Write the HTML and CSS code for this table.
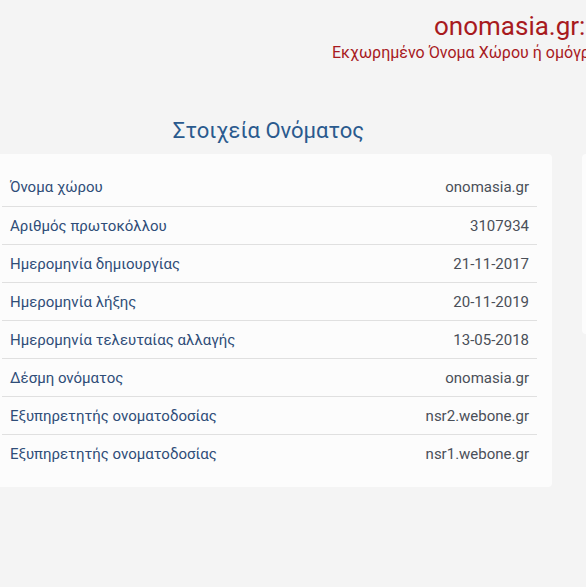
FILE: index.html
```html
<!DOCTYPE html>
<html lang="el">
<head>
<meta charset="utf-8">
<title>onomasia.gr</title>
<link rel="stylesheet" href="styles.css">
</head>
<body>
<header class="site-header">
  <h1 class="site-title">onomasia.gr:</h1>
  <p class="site-sub">Εκχωρημένο Όνομα Χώρου ή ομόγραφο</p>
</header>
<main class="content">
  <section class="col-main">
    <h2 class="section-title">Στοιχεία Ονόματος</h2>
    <div class="card">
      <table class="info">
        <tr><td>Όνομα χώρου</td><td class="val">onomasia.gr</td></tr>
        <tr><td>Αριθμός πρωτοκόλλου</td><td class="val">3107934</td></tr>
        <tr><td>Ημερομηνία δημιουργίας</td><td class="val">21-11-2017</td></tr>
        <tr><td>Ημερομηνία λήξης</td><td class="val">20-11-2019</td></tr>
        <tr><td>Ημερομηνία τελευταίας αλλαγής</td><td class="val">13-05-2018</td></tr>
        <tr><td>Δέσμη ονόματος</td><td class="val">onomasia.gr</td></tr>
        <tr><td>Εξυπηρετητής ονοματοδοσίας</td><td class="val">nsr2.webone.gr</td></tr>
        <tr><td>Εξυπηρετητής ονοματοδοσίας</td><td class="val">nsr1.webone.gr</td></tr>
      </table>
    </div>
  </section>
  <aside class="col-side">
    <div class="side-card"></div>
  </aside>
</main>
</body>
</html>
```
FILE: styles.css
```css
html, body {
  margin: 0;
  padding: 0;
  background: #f4f4f4;
  overflow: hidden;
}
body {
  font-family: Roboto, "Liberation Sans", sans-serif;
  width: 586px;
  height: 587px;
}
.site-header {
  white-space: nowrap;
  overflow: hidden;
  padding-top: 10px;
}
.site-title {
  margin: 0 0 0 434px;
  font-size: 26px;
  font-weight: 400;
  line-height: 32px;
  color: #a81a1e;
}
.site-sub {
  margin: 1px 0 0 332px;
  font-size: 16px;
  line-height: 20px;
  color: #a81a1e;
}
.content {
  display: flex;
  gap: 30px;
  margin-top: 54px;
}
.col-main {
  flex: 0 0 552px;
}
.section-title {
  margin: 0;
  width: 537px;
  text-align: center;
  font-size: 22px;
  font-weight: 400;
  line-height: 28px;
  color: #2a5a8e;
}
.card {
  margin-top: 9px;
  background: #fcfcfc;
  border-radius: 0 4px 4px 0;
  padding: 14px 15px 15px 2px;
}
.info {
  width: 535px;
  border-collapse: collapse;
  font-size: 15px;
}
.info td {
  height: 37px;
  padding: 0 8px;
  color: #2f4d78;
  border-top: 1px solid #e0e0e0;
  white-space: nowrap;
}
.info tr:first-child td {
  border-top: none;
  height: 38px;
}
.info td.val {
  text-align: right;
  color: #4a4f58;
}
.col-side {
  flex: 0 0 300px;
  padding-top: 37px;
}
.side-card {
  background: #fcfcfc;
  border-radius: 4px 0 0 4px;
  height: 180px;
}
```
